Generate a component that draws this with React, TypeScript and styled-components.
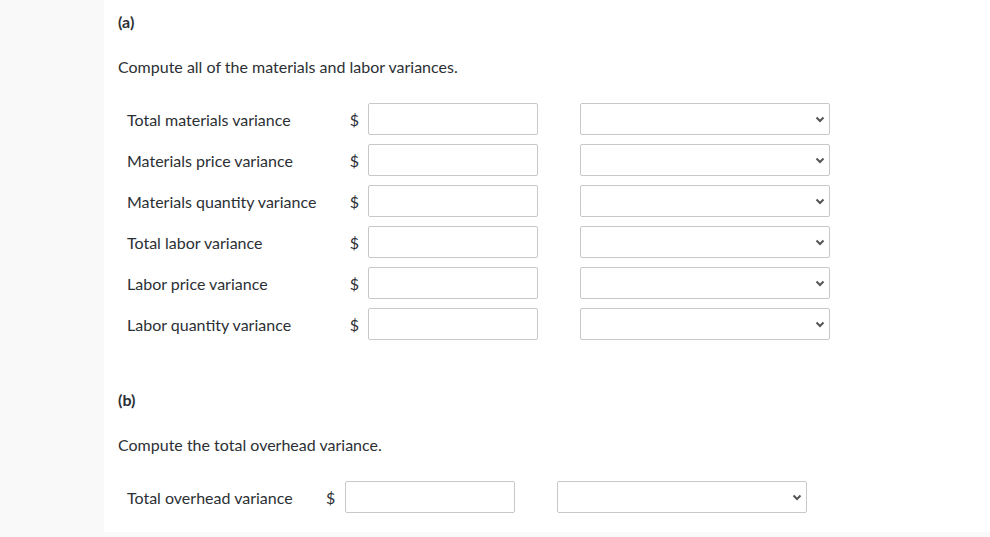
import React from 'react';
import styled, { createGlobalStyle } from 'styled-components';

const GlobalStyle = createGlobalStyle`
    html, body {
        margin: 0;
        padding: 0;
        background: #f9f9f9;
        font-family: Lato, "Liberation Sans", sans-serif;
        color: #2c3035;
    }
`;

const Page = styled.div`
    margin-left: 104px;
    height: 532px;
    background: #ffffff;
    padding: 12px 0 0 14px;
    box-sizing: border-box;
`;

const PartLabel = styled.div`
    font-weight: 700;
    font-size: 16px;
    line-height: 20px;
    height: 20px;
`;

const Prompt = styled.p`
    margin: 25px 0 0 0;
    font-size: 16px;
    line-height: 20px;
`;

const Grid = styled.div<{ $top: number }>`
    display: grid;
    grid-template-columns: max-content 10px 179px 292px;
    row-gap: 9px;
    margin-top: ${({ $top }) => $top}px;
    align-items: center;
`;

const Label = styled.div`
    padding-left: 9px;
    padding-right: 33px;
    font-size: 16px;
`;

const Dollar = styled.div`
    font-size: 16px;
    text-align: center;
`;

const AmountInput = styled.input`
    margin-left: 9px;
    width: 170px;
    height: 32px;
    box-sizing: border-box;
    border: 1px solid #c8c8c8;
    border-radius: 2px;
    background: #fff;
`;

const SelectBox = styled.div`
    margin-left: 42px;
    width: 250px;
    height: 32px;
    box-sizing: border-box;
    border: 1px solid #c8c8c8;
    border-radius: 2px;
    background: #fff;
    display: flex;
    align-items: center;
    justify-content: flex-end;
    padding-right: 4px;
`;

const Chevron = () => (
    <svg width="10" height="7" viewBox="0 0 10 7">
        <path d="M1.5 1.5 L5 5 L8.5 1.5" fill="none" stroke="#555" strokeWidth="2" />
    </svg>
);

const Section = styled.section<{ $top: number }>`
    margin-top: ${({ $top }) => $top}px;
`;

const rowsA = [
    'Total materials variance',
    'Materials price variance',
    'Materials quantity variance',
    'Total labor variance',
    'Labor price variance',
    'Labor quantity variance',
];

const Row: React.FC<{ label: string }> = ({ label }) => (
    <>
        <Label>{label}</Label>
        <Dollar>$</Dollar>
        <AmountInput type="text" />
        <SelectBox>
            <Chevron />
        </SelectBox>
    </>
);

const App: React.FC = () => {
    return (
        <>
            <GlobalStyle />
            <Page>
                <Section $top={0}>
                    <PartLabel>(a)</PartLabel>
                    <Prompt>Compute all of the materials and labor variances.</Prompt>
                    <Grid $top={26}>
                        {rowsA.map((r) => (
                            <Row key={r} label={r} />
                        ))}
                    </Grid>
                </Section>
                <Section $top={50}>
                    <PartLabel>(b)</PartLabel>
                    <Prompt>Compute the total overhead variance.</Prompt>
                    <Grid $top={26}>
                        <Row label="Total overhead variance" />
                    </Grid>
                </Section>
            </Page>
        </>
    );
};

export default App;
